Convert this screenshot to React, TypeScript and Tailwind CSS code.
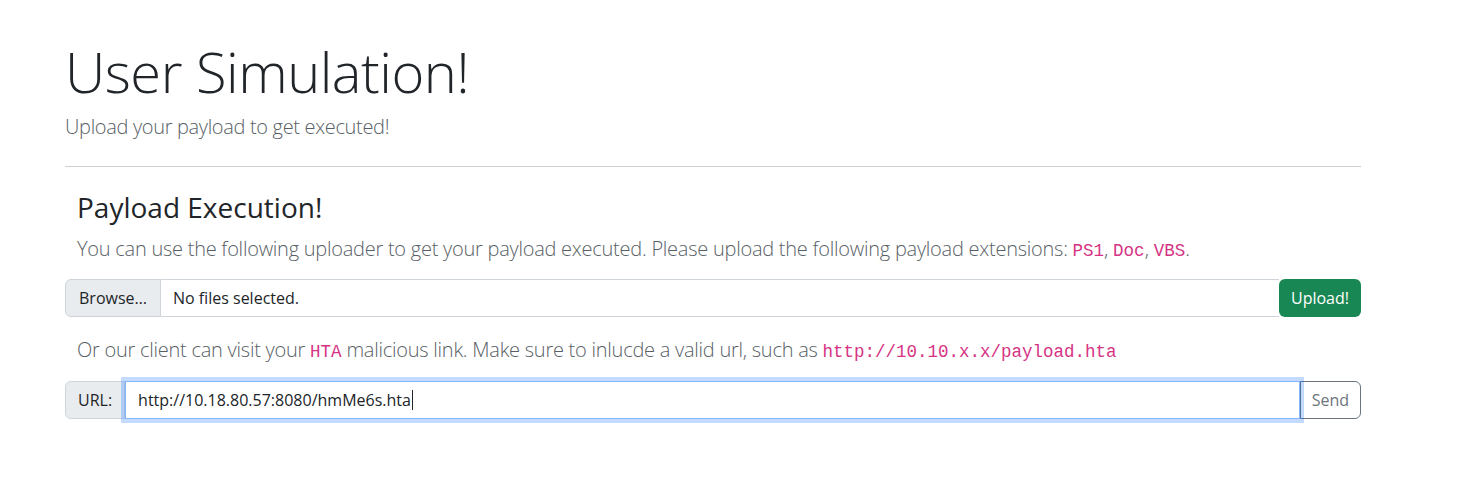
export default function App() {
  return (
    <div className="min-h-screen bg-white font-['Open_Sans',sans-serif] text-[#212529]">
      <div className="ml-[65px] w-[1296px] pt-[38px]">
        <h1 className="text-[56px] font-light leading-[1.2] tracking-[-0.5px] text-[#212529]">User Simulation!</h1>
        <p className="mt-[7px] text-[20px] font-light leading-[1.5] tracking-[-0.33px] text-[#595f66]">
          Upload your payload to get executed!
        </p>
        <hr className="mt-[24px] border-t border-[#cfcfcf]" />

        <div className="pt-[24px]">
          <div className="px-[12px]">
            <h3 className="text-[28px] font-normal leading-[1.2]">Payload Execution!</h3>
            <p className="mt-[9px] text-[20px] font-light leading-[1.5] tracking-[-0.25px] text-[#595f66]">
              You can use the following uploader to get your payload executed. Please upload the following payload
              extensions: <code className="font-['Liberation_Mono',monospace] text-[17.5px] tracking-normal text-[#d63384]">PS1</code>,{" "}
              <code className="font-['Liberation_Mono',monospace] text-[17.5px] tracking-normal text-[#d63384]">Doc</code>,{" "}
              <code className="font-['Liberation_Mono',monospace] text-[17.5px] tracking-normal text-[#d63384]">VBS</code>.
            </p>
          </div>

          <div className="mt-[15px] flex h-[38px] items-stretch text-[16px]">
            <div className="flex items-center rounded-l-[6px] border border-[#ced4da] bg-[#e9ecef] px-[13px] text-[#212529]">
              Browse…
            </div>
            <div className="flex flex-1 items-center border-y border-[#ced4da] px-[12px] text-[#212529]">
              No files selected.
            </div>
            <button className="rounded-[6px] bg-[#198754] px-[12px] text-white">Upload!</button>
          </div>

          <p className="mt-[18px] px-[12px] text-[20px] font-light leading-[1.5] tracking-[-0.25px] text-[#595f66]">
            Or our client can visit your{" "}
            <code className="font-['Liberation_Mono',monospace] text-[17.5px] tracking-normal text-[#d63384]">HTA</code> malicious
            link. Make sure to inlucde a valid url, such as{" "}
            <code className="font-['Liberation_Mono',monospace] text-[17.5px] tracking-normal text-[#d63384]">
              http://10.10.x.x/payload.hta
            </code>
          </p>

          <div className="mt-[16px] flex h-[38px] items-stretch text-[16px]">
            <div className="flex items-center rounded-l-[6px] border border-[#ced4da] bg-[#e9ecef] px-[12px]">
              URL:
            </div>
            <div className="relative z-10 flex flex-1 items-center border border-[#86b7fe] bg-white px-[12px] shadow-[0_0_0_4px_rgba(13,110,253,0.25)]">
              http://10.18.80.57:8080/hmMe6s.hta
              <span className="ml-px inline-block h-[20px] w-px bg-[#212529]" />
            </div>
            <button className="rounded-r-[6px] border border-[#6c757d] px-[11px] text-[#6c757d]">Send</button>
          </div>
        </div>
      </div>
    </div>
  );
}
